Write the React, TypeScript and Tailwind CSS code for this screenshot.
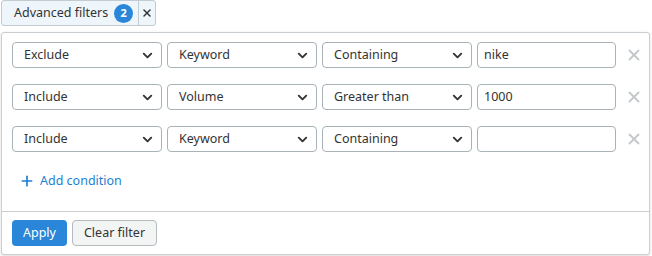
import { X, Plus, ChevronDown } from 'lucide-react';

interface Condition {
  mode: string;
  field: string;
  op: string;
  value: string;
}

const conditions: Condition[] = [
  { mode: 'Exclude', field: 'Keyword', op: 'Containing', value: 'nike' },
  { mode: 'Include', field: 'Volume', op: 'Greater than', value: '1000' },
  { mode: 'Include', field: 'Keyword', op: 'Containing', value: '' },
];

function Select({ label }: { label: string }) {
  return (
    <div className="flex h-[26px] w-[150px] items-center justify-between rounded-[4px] border border-[#a9b2b7] bg-white pl-[11px] pr-[6px] text-[12.5px] text-[#333]">
      <span>{label}</span>
      <ChevronDown size={15} strokeWidth={3} className="text-[#333]" />
    </div>
  );
}

export default function App() {
  return (
    <div className="h-[256px] w-[652px] bg-white font-['Noto_Sans',sans-serif] text-[#333]">
      {/* ── filter tag ── */}
      <div className="ml-[1px] flex h-[26px] w-fit items-stretch rounded-[3px] border border-[#c2cbd0] bg-[#eef6fc]">
        <div className="flex items-center gap-[6px] pl-[12px] pr-[5px] text-[12.5px]">
          <span>Advanced filters</span>
          <span className="flex h-[19px] w-[19px] items-center justify-center rounded-full bg-[#2a86d8] text-[11px] font-bold text-white">
            2
          </span>
        </div>
        <div className="flex w-[17px] items-center justify-center border-l border-[#c2cbd0]">
          <X size={12} strokeWidth={3} className="text-[#333]" />
        </div>
      </div>

      {/* ── panel ── */}
      <div className="ml-[1px] mt-[6px] flex h-[223px] w-[649px] flex-col rounded-[3px] border border-[#c9cfd3] bg-white shadow-[0_1px_3px_rgba(0,0,0,0.15)]">
        <div className="flex flex-1 flex-col pl-[10px] pt-[9px]">
          <div className="flex flex-col gap-[16px]">
            {conditions.map((c, i) => (
              <div key={i} className="flex items-center gap-[5px]">
                <Select label={c.mode} />
                <Select label={c.field} />
                <Select label={c.op} />
                <div className="flex h-[26px] w-[139px] items-center rounded-[4px] border border-[#a9b2b7] pl-[6px] text-[12.5px]">
                  {c.value}
                </div>
                <X size={18} strokeWidth={2.4} className="ml-[4px] text-[#c4c8cb]" />
              </div>
            ))}
          </div>
          <div className="mt-[20px] flex items-center gap-[5px] pl-[7px] text-[12.5px] text-[#1b7fd3]">
            <Plus size={16} strokeWidth={2.5} />
            <span>Add condition</span>
          </div>
        </div>
        <div className="flex h-[43px] items-center gap-[5px] border-t border-[#c9cfd3] px-[10px]">
          <button className="h-[26px] rounded-[4px] bg-[#2a86d8] px-[11px] text-[12.5px] text-white">
            Apply
          </button>
          <button className="h-[26px] rounded-[4px] border border-[#b3bbbf] bg-[#f3f5f5] px-[11px] text-[12.5px] text-[#333]">
            Clear filter
          </button>
        </div>
      </div>
    </div>
  );
}
